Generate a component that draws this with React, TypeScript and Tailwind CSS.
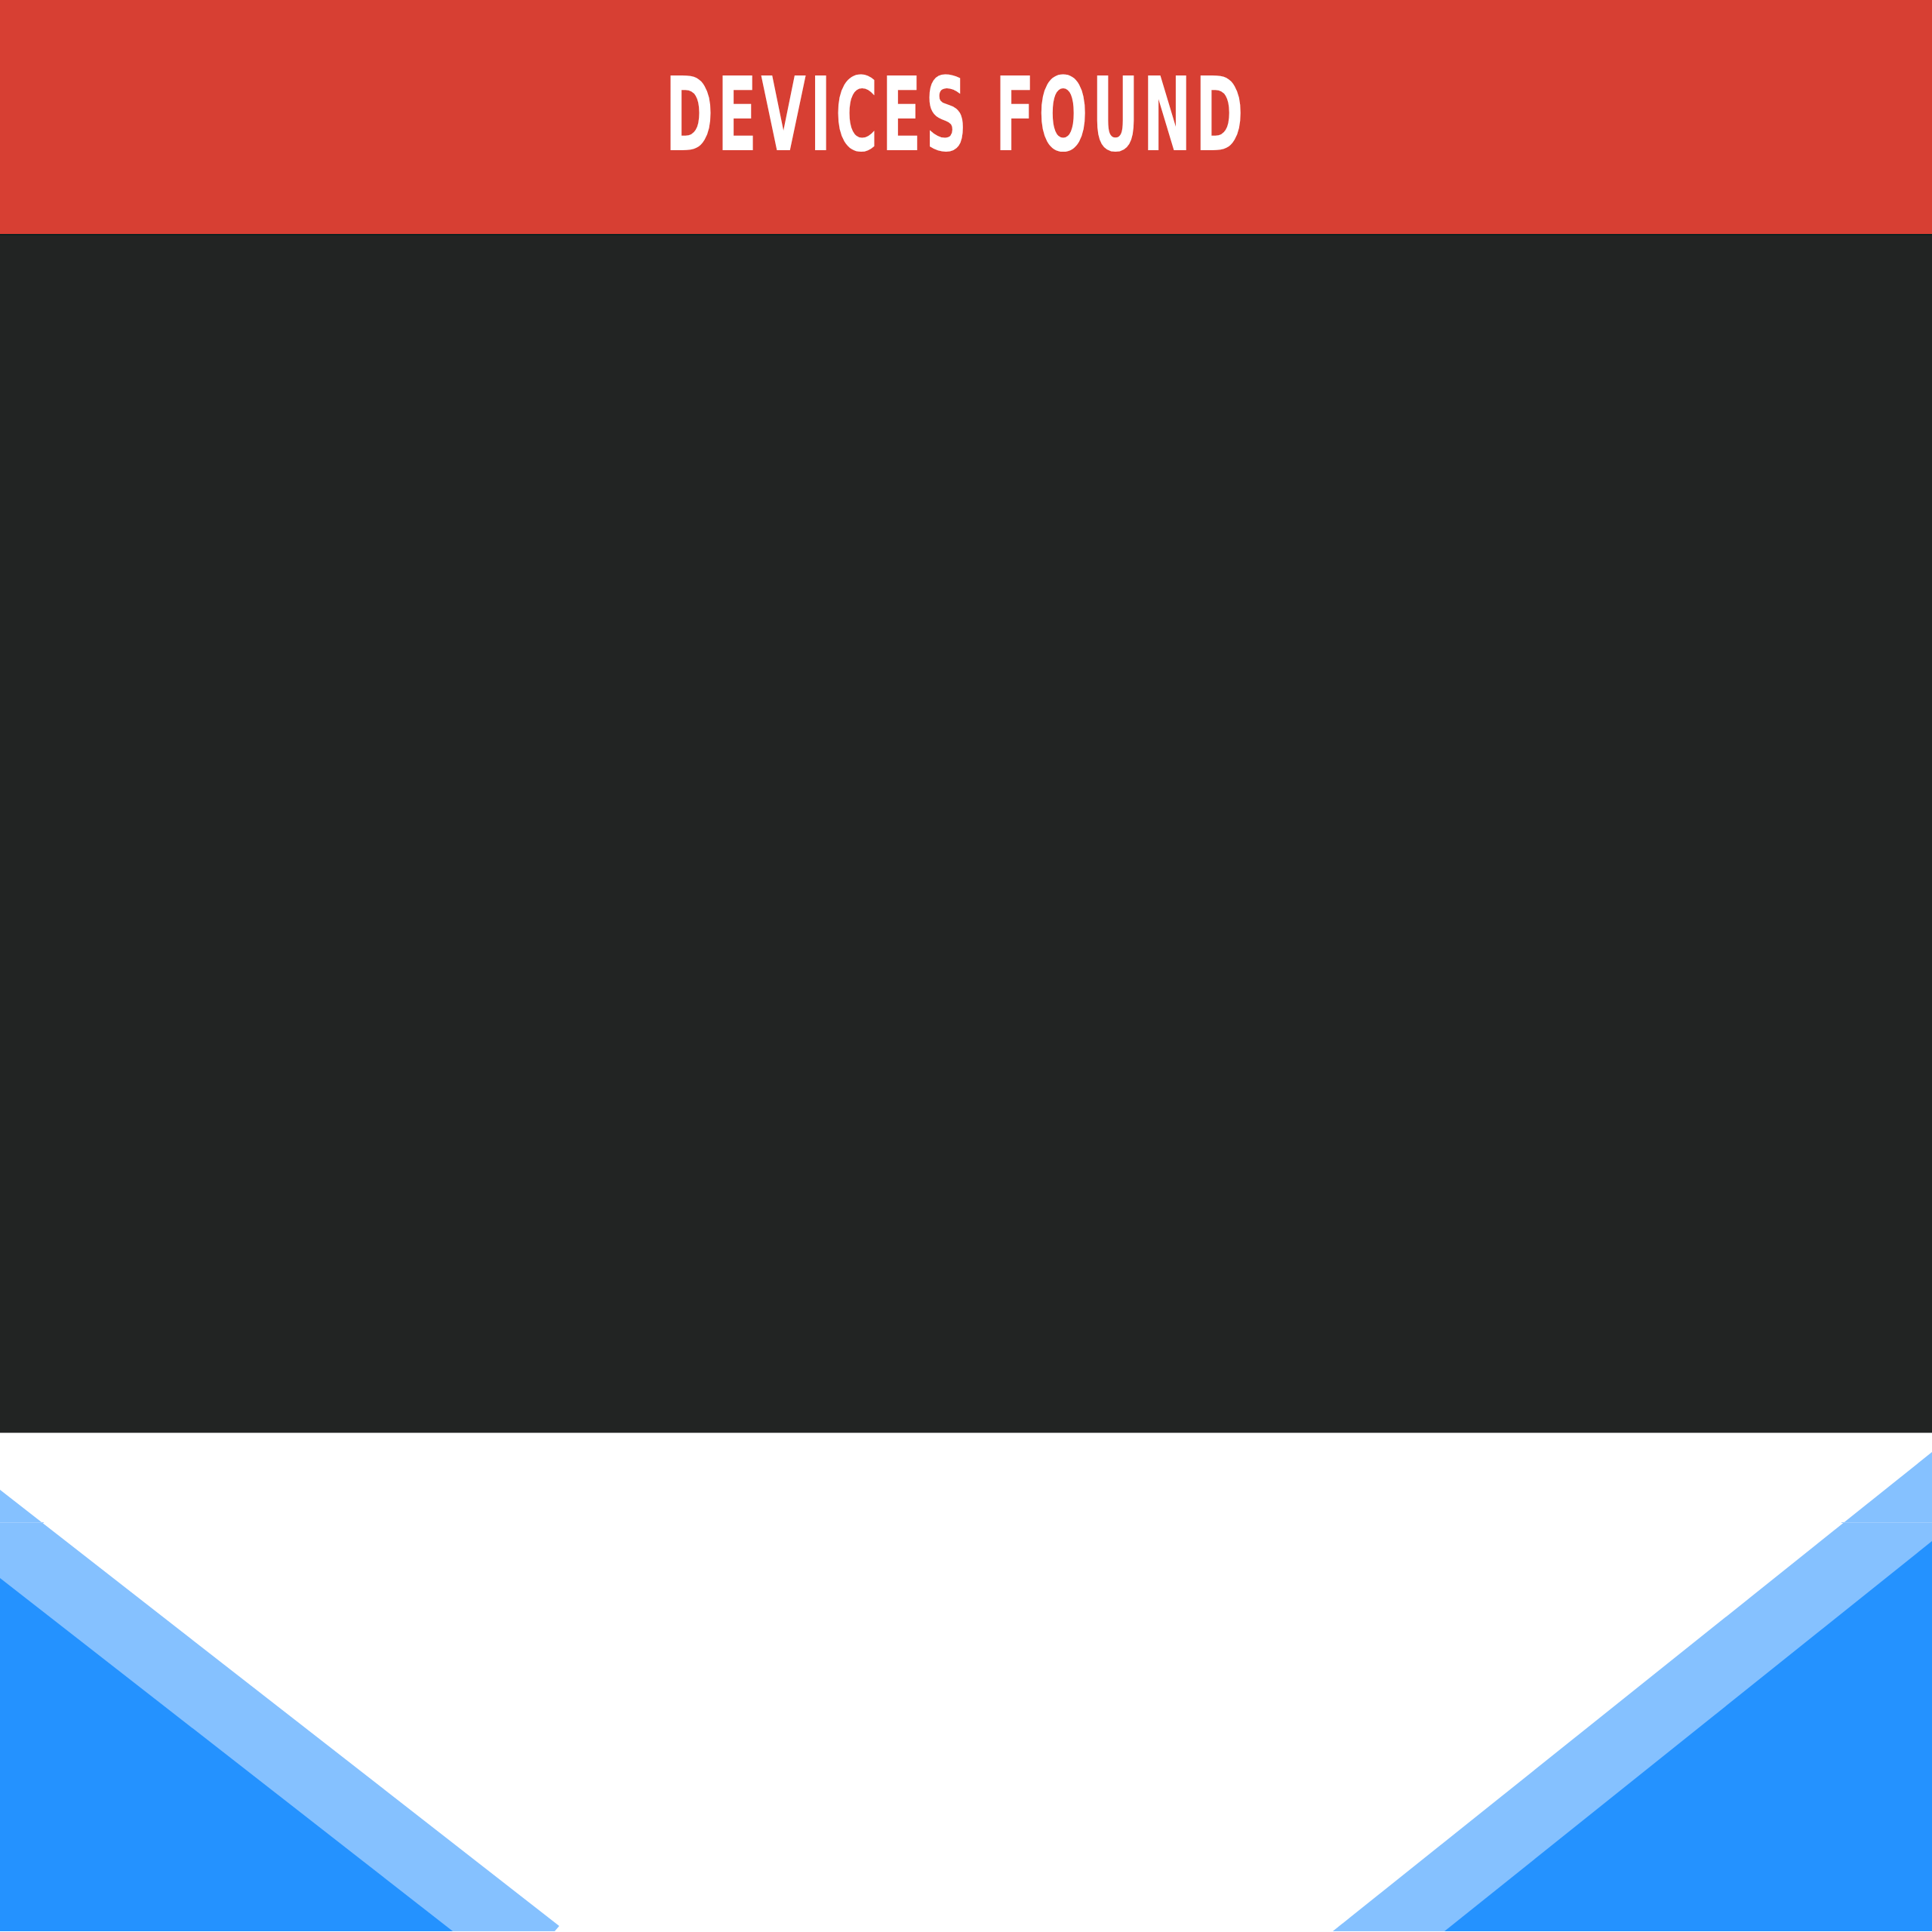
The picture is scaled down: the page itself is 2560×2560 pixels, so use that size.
import React from 'react';

const Backdrop: React.FC = () => (
  <svg className="block w-full h-[660px]" viewBox="0 1900 2560 660" preserveAspectRatio="none">
    {/* left wedge */}
    <polygon points="0,1975 741,2553 735,2560 0,2560" fill="#85c1ff" />
    <polygon points="0,2092 600,2560 0,2560" fill="#2492ff" />
    <line x1="0" y1="2018.5" x2="58" y2="2018.5" stroke="#9fcdff" strokeWidth="1" />
    {/* right wedge */}
    <polygon points="2560,1925 2560,2560 1766,2560" fill="#85c1ff" />
    <polygon points="2560,2043 2560,2560 1914,2560" fill="#2492ff" />
    <line x1="2440" y1="2018.5" x2="2560" y2="2018.5" stroke="#9fcdff" strokeWidth="1" />
  </svg>
);

export default function App() {
  return (
    <div className="w-full h-[2560px] flex flex-col bg-white overflow-hidden">
      {/* Title bar */}
      <header className="h-[312px] shrink-0 bg-[#d73f33] border-b-2 border-[#0f211f] flex items-center justify-center pb-[6px] pr-[26px]">
        <h1
          className="text-white font-bold text-[136px] leading-none tracking-[8px] scale-x-[0.63] whitespace-nowrap"
          style={{ fontFamily: '"DejaVu Sans Condensed", "Liberation Sans", sans-serif' }}
        >
          DEVICES FOUND
        </h1>
      </header>

      {/* Device list (empty) */}
      <main className="h-[1587px] shrink-0 bg-[#222423] border-b border-[#8c8c8c]" />

      <footer className="flex-1 bg-white">
        <Backdrop />
      </footer>
    </div>
  );
}
